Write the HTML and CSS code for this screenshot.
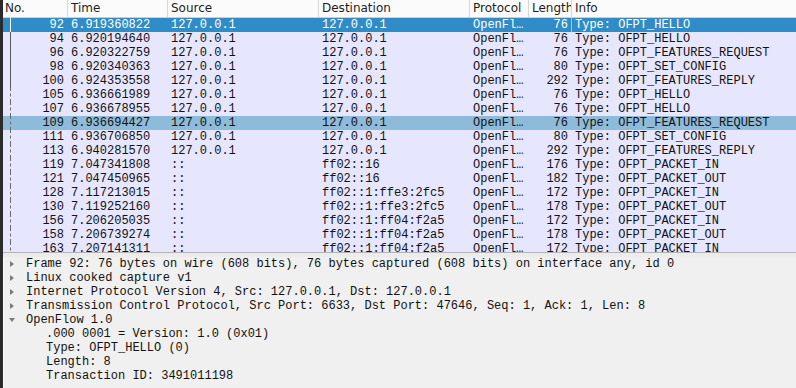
FILE: index.html
```html
<!DOCTYPE html>
<html lang="en">
<head>
    <meta charset="UTF-8">
    <title>OpenFlow capture</title>
    <link rel="stylesheet" href="styles.css">
</head>
<body>
    <div class="window">
        <div class="packet-list">
            <div class="list-head">
                <div class="hcell">No.</div>
                <div class="hcell">Time</div>
                <div class="hcell">Source</div>
                <div class="hcell">Destination</div>
                <div class="hcell">Protocol</div>
                <div class="hcell">Length</div>
                <div class="hcell">Info</div>
            </div>
            <div class="rows">
                <div class="row selected"><span class="c no first">92</span><span class="c">6.919360822</span><span class="c">127.0.0.1</span><span class="c">127.0.0.1</span><span class="c">OpenFl…</span><span class="c len">76</span><span class="c info focus">Type: OFPT_HELLO</span></div>
                <div class="row"><span class="c no solid">94</span><span class="c">6.920194640</span><span class="c">127.0.0.1</span><span class="c">127.0.0.1</span><span class="c">OpenFl…</span><span class="c len">76</span><span class="c info">Type: OFPT_HELLO</span></div>
                <div class="row"><span class="c no solid">96</span><span class="c">6.920322759</span><span class="c">127.0.0.1</span><span class="c">127.0.0.1</span><span class="c">OpenFl…</span><span class="c len">76</span><span class="c info">Type: OFPT_FEATURES_REQUEST</span></div>
                <div class="row"><span class="c no solid">98</span><span class="c">6.920340363</span><span class="c">127.0.0.1</span><span class="c">127.0.0.1</span><span class="c">OpenFl…</span><span class="c len">80</span><span class="c info">Type: OFPT_SET_CONFIG</span></div>
                <div class="row"><span class="c no solid">100</span><span class="c">6.924353558</span><span class="c">127.0.0.1</span><span class="c">127.0.0.1</span><span class="c">OpenFl…</span><span class="c len">292</span><span class="c info">Type: OFPT_FEATURES_REPLY</span></div>
                <div class="row"><span class="c no dashed">105</span><span class="c">6.936661989</span><span class="c">127.0.0.1</span><span class="c">127.0.0.1</span><span class="c">OpenFl…</span><span class="c len">76</span><span class="c info">Type: OFPT_HELLO</span></div>
                <div class="row"><span class="c no dashed">107</span><span class="c">6.936678955</span><span class="c">127.0.0.1</span><span class="c">127.0.0.1</span><span class="c">OpenFl…</span><span class="c len">76</span><span class="c info">Type: OFPT_HELLO</span></div>
                <div class="row hover"><span class="c no dashed">109</span><span class="c">6.936694427</span><span class="c">127.0.0.1</span><span class="c">127.0.0.1</span><span class="c">OpenFl…</span><span class="c len">76</span><span class="c info">Type: OFPT_FEATURES_REQUEST</span></div>
                <div class="row"><span class="c no dashed">111</span><span class="c">6.936706850</span><span class="c">127.0.0.1</span><span class="c">127.0.0.1</span><span class="c">OpenFl…</span><span class="c len">80</span><span class="c info">Type: OFPT_SET_CONFIG</span></div>
                <div class="row"><span class="c no dashed">113</span><span class="c">6.940281570</span><span class="c">127.0.0.1</span><span class="c">127.0.0.1</span><span class="c">OpenFl…</span><span class="c len">292</span><span class="c info">Type: OFPT_FEATURES_REPLY</span></div>
                <div class="row"><span class="c no dashed">119</span><span class="c">7.047341808</span><span class="c">::</span><span class="c">ff02::16</span><span class="c">OpenFl…</span><span class="c len">176</span><span class="c info">Type: OFPT_PACKET_IN</span></div>
                <div class="row"><span class="c no dashed">121</span><span class="c">7.047450965</span><span class="c">::</span><span class="c">ff02::16</span><span class="c">OpenFl…</span><span class="c len">182</span><span class="c info">Type: OFPT_PACKET_OUT</span></div>
                <div class="row"><span class="c no dashed">128</span><span class="c">7.117213015</span><span class="c">::</span><span class="c">ff02::1:ffe3:2fc5</span><span class="c">OpenFl…</span><span class="c len">172</span><span class="c info">Type: OFPT_PACKET_IN</span></div>
                <div class="row"><span class="c no dashed">130</span><span class="c">7.119252160</span><span class="c">::</span><span class="c">ff02::1:ffe3:2fc5</span><span class="c">OpenFl…</span><span class="c len">178</span><span class="c info">Type: OFPT_PACKET_OUT</span></div>
                <div class="row"><span class="c no dashed">156</span><span class="c">7.206205035</span><span class="c">::</span><span class="c">ff02::1:ff04:f2a5</span><span class="c">OpenFl…</span><span class="c len">172</span><span class="c info">Type: OFPT_PACKET_IN</span></div>
                <div class="row"><span class="c no dashed">158</span><span class="c">7.206739274</span><span class="c">::</span><span class="c">ff02::1:ff04:f2a5</span><span class="c">OpenFl…</span><span class="c len">178</span><span class="c info">Type: OFPT_PACKET_OUT</span></div>
                <div class="row"><span class="c no dashed">163</span><span class="c">7.207141311</span><span class="c">::</span><span class="c">ff02::1:ff04:f2a5</span><span class="c">OpenFl…</span><span class="c len">172</span><span class="c info">Type: OFPT_PACKET_IN</span></div>
            </div>
        </div>

        <div class="splitter"></div>

        <div class="details">
            <div class="node"><svg class="arrow" width="8" height="8" viewBox="0 0 8 8"><path d="M2 1 L6 4 L2 7 Z" fill="#7a7a7a"/></svg><span>Frame 92: 76 bytes on wire (608 bits), 76 bytes captured (608 bits) on interface any, id 0</span></div>
            <div class="node"><svg class="arrow" width="8" height="8" viewBox="0 0 8 8"><path d="M2 1 L6 4 L2 7 Z" fill="#7a7a7a"/></svg><span>Linux cooked capture v1</span></div>
            <div class="node"><svg class="arrow" width="8" height="8" viewBox="0 0 8 8"><path d="M2 1 L6 4 L2 7 Z" fill="#7a7a7a"/></svg><span>Internet Protocol Version 4, Src: 127.0.0.1, Dst: 127.0.0.1</span></div>
            <div class="node"><svg class="arrow" width="8" height="8" viewBox="0 0 8 8"><path d="M2 1 L6 4 L2 7 Z" fill="#7a7a7a"/></svg><span>Transmission Control Protocol, Src Port: 6633, Dst Port: 47646, Seq: 1, Ack: 1, Len: 8</span></div>
            <div class="node"><svg class="arrow" width="8" height="8" viewBox="0 0 8 8"><path d="M1 2 L7 2 L4 6 Z" fill="#7a7a7a"/></svg><span>OpenFlow 1.0</span></div>
            <div class="node child"><span>.000 0001 = Version: 1.0 (0x01)</span></div>
            <div class="node child"><span>Type: OFPT_HELLO (0)</span></div>
            <div class="node child"><span>Length: 8</span></div>
            <div class="node child"><span>Transaction ID: 3491011198</span></div>
        </div>
    </div>
</body>
</html>
```

FILE: styles.css
```css
body {
    margin: 0;
    padding: 0;
    background-color: #2b2b2b;
}

.window {
    width: 793px;
    height: 388px;
    margin-left: 3px;
    display: flex;
    flex-direction: column;
    background-color: #efefef;
    overflow: hidden;
}

.packet-list {
    height: 252px;
    display: flex;
    flex-direction: column;
    background-color: #ffffff;
}

.list-head,
.row {
    display: grid;
    grid-template-columns: 64px 100px 151px 151px 59px 43px 1fr;
}

.list-head {
    height: 18px;
    background-color: #fbfbfb;
    border-bottom: 1px solid #cfcfcf;
    box-sizing: border-box;
}

.hcell {
    font-family: "DejaVu Sans", sans-serif;
    font-size: 12px;
    line-height: 17px;
    color: #1e1e1e;
    padding-left: 3px;
    border-left: 1px solid #d6d6d6;
    white-space: nowrap;
    overflow: hidden;
}

.hcell:first-child {
    border-left: none;
    padding-left: 2px;
}

.rows {
    flex: 1;
    overflow: hidden;
}

.row {
    height: 14px;
    background-color: #e7e6ff;
    color: #121212;
    font-family: "Liberation Mono", monospace;
    font-size: 12px;
    line-height: 14px;
}

.row.selected {
    background-color: #308cc6;
    color: #ffffff;
}

.row.hover {
    background-color: #8dbbd9;
}

.c {
    padding: 0 3px 0 4px;
    white-space: nowrap;
    overflow: hidden;
}

.c.no,
.c.len {
    text-align: right;
    padding: 0 3px 0 0;
}

.c.no {
    position: relative;
}

.c.no::before {
    content: "";
    position: absolute;
    left: 7px;
    top: 0;
    bottom: 0;
}

.c.first::before {
    border-left: 1px solid #ffffff;
}

.c.solid::before {
    border-left: 1px solid #5a5a5a;
}

.c.dashed::before {
    border-left: 1px dashed #6a6a6a;
}

.c.focus {
    box-shadow: inset 1px 0 0 #9fcbe8;
}

.splitter {
    height: 5px;
    border-top: 1px solid #b4b4b4;
    box-sizing: border-box;
    background-color: #ececec;
}

.details {
    flex: 1;
    background-color: #f0f0f0;
    border-left: 1px solid #fafafa;
    padding-top: 0;
}

.node {
    height: 14px;
    display: flex;
    align-items: center;
    font-family: "Liberation Mono", monospace;
    font-size: 12px;
    line-height: 14px;
    color: #111;
    white-space: nowrap;
}

.arrow {
    margin: 0 10px 0 4px;
}

.node.child {
    padding-left: 42px;
}
```
